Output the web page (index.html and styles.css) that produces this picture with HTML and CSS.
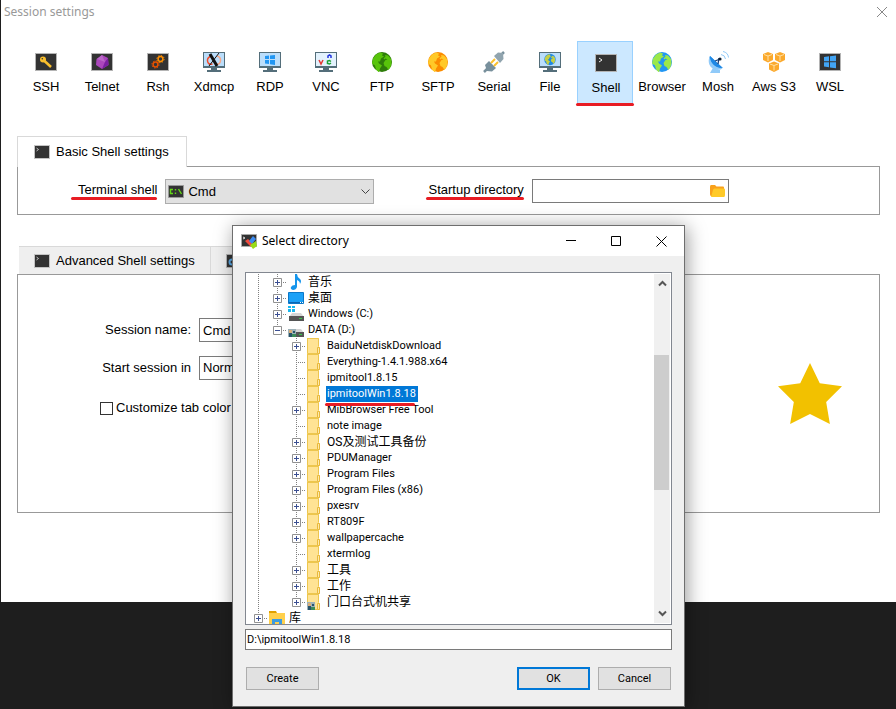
FILE: index.html
```html
<!DOCTYPE html>
<html lang="en">
<head>
<meta charset="utf-8">
<title>Session settings</title>
<link rel="stylesheet" href="styles.css">
</head>
<body>
<svg class="defs" aria-hidden="true">
  <symbol id="term" viewBox="0 0 22 18"><path fill="#b4b4b4" d="M0 0h22v18H0z"/><path fill="#333" d="M1 1h20v16H1z"/></symbol>
  <symbol id="shell" viewBox="0 0 22 18"><use href="#term"/><path d="M4 4l3 2-3 2" fill="none" stroke="#eee"/></symbol>
  <symbol id="shell-s" viewBox="0 0 16 14"><path fill="#c4c4c4" d="M0 0h16v14H0z"/><path fill="#333" d="M1 1h14v12H1z"/><path d="M2.500 3l2 1.500-2 1.500" fill="none" stroke="#ddd" stroke-width=".8"/></symbol>
  <symbol id="monitor" viewBox="0 0 22 20"><path fill="#546e7a" d="M0 0h22v16H0zM8 16h6v2h4v2H4v-2h4z"/><path fill="#bbdefb" d="M1 1h20v13H1z"/></symbol>
  <symbol id="land" viewBox="0 0 20 20"><path d="M8 .5l3 1-1 2 2 1-3 2-1 3-2 0 1 2 3 2-2 3-1 4-3-3-1-4-3-2 1-5 3-4zM13 3l3 .500 3 3.500.5 4-1 4-2 3-2-3-2-1-1-3 2-3 2-.500-2-1-1 1-1-1 2-2z"/></symbol>
  <symbol id="folder" viewBox="0 0 16 16"><path fill="#ffe394" d="M0 0h12v9l1 0v7H0z"/><path fill="none" stroke="#edc64e" d="M.5 0v15.500H10.500M0 .5h11.500v8"/><path fill="#ffe9a9" stroke="#e8b93c" d="M10.500 9.500h2v6h-2z"/></symbol>
  <symbol id="people" viewBox="0 0 8 8"><path fill="#9db1b8" d="M0 0h8v8H0z"/><path fill="#28536b" d="M1 4h3v4H1zM5 2h2v2H5z"/><path fill="#d8ad78" d="M1 1h3v3H1z"/><path fill="#3c8b59" d="M4 5h4v3H4z"/></symbol>
  <symbol id="drive" viewBox="0 0 16 16"><path fill="#d6d6d6" d="M4 7h9l3 4H1z"/><path fill="#555" d="M1 10h15v5H1z"/><path fill="#38c84a" d="M11 12h3v1h-3z"/></symbol>
  <symbol id="plus" viewBox="0 0 9 9"><path fill="#fff" stroke="#919191" d="M.5.5h8v8h-8z"/><path stroke="#3b4f92" d="M2 4.500h5M4.500 2v5"/></symbol>
  <symbol id="minus" viewBox="0 0 9 9"><path fill="#fff" stroke="#919191" d="M.5.5h8v8h-8z"/><path stroke="#3b4f92" d="M2 4.500h5"/></symbol>
</svg>

<main class="window">
  <header class="titlebar">
    <h1>Session settings</h1>
    <button class="plain" aria-label="Close"><svg width="12" height="12"><path d="M1 1l10 10M11 1L1 11" stroke="#888"/></svg></button>
  </header>

  <nav class="types">
    <button class="type"><svg width="22" height="22" viewBox="0 -2 22 22"><use href="#term" width="22" height="18"/><circle cx="8" cy="6.500" r="3" fill="#fbc02d"/><path d="M9 7.500l7 6.500" stroke="#fbc02d" stroke-width="2.500"/><circle cx="7.300" cy="5.800" r=".8" fill="#333"/></svg>SSH</button>
    <button class="type"><svg width="22" height="22" viewBox="0 -2 22 22"><use href="#term" width="22" height="18"/><path fill="#ab47bc" d="M11 2l6 3 .500 7-6.500 4-6-4 .500-6z"/><path fill="#7b1fa2" d="M17 5l.5 7-6.500 4 3-7z"/><path fill="#ba68c8" d="M11 2l3 7-8-3z"/></svg>Telnet</button>
    <button class="type"><svg width="22" height="22" viewBox="0 -2 22 22"><use href="#term" width="22" height="18"/><g fill="none"><circle cx="13.500" cy="6" r="2.400" stroke="#fb8c00" stroke-width="1.500"/><circle cx="13.500" cy="6" r="3.600" stroke="#fb8c00" stroke-dasharray="1.400 1.400"/><circle cx="8.500" cy="11.500" r="2.400" stroke="#e65100" stroke-width="1.500"/><circle cx="8.500" cy="11.500" r="3.600" stroke="#e65100" stroke-dasharray="1.400 1.400"/></g></svg>Rsh</button>
    <button class="type"><svg width="22" height="22" viewBox="0 -1 22 22"><use href="#monitor" width="22" height="20"/><path d="M9 4Q4 5 4.500 9t5 3" fill="none" stroke="#f04a2a" stroke-width="1.500"/><path d="M14 4q4 1 3.500 5t-5 3" fill="none" stroke="#f7a98a" stroke-width="1.500"/><path d="M7 2l7 12" stroke="#111" stroke-width="3"/><path d="M16 1L6 14" stroke="#111"/></svg>Xdmcp</button>
    <button class="type"><svg width="22" height="22" viewBox="0 -1 22 22"><use href="#monitor" width="22" height="20"/><path fill="#2196f3" d="M6 4l4-.5V7H6zm5-.6L16 3v4h-5zM6 8h4v4l-4-.5zm5 0h5v5l-5-.8z"/></svg>RDP</button>
    <button class="type"><svg width="22" height="22" viewBox="0 -1 22 22"><use href="#monitor" width="22" height="20"/><path fill="#e3f2fd" d="M1 1h20v13H1z"/><g fill="none" stroke-width="1.500"><path stroke="#e53935" d="M4 8l2 4 2-4"/><path stroke="#2233e0" d="M13 6V4l1.500-1L16 4v2"/><path stroke="#19a030" d="M16 9.500l-1.500-1L12.500 9v2.500l2 .500 1.500-1"/></g></svg>VNC</button>
    <button class="type"><svg width="22" height="22" viewBox="-1 -1 22 22"><circle cx="10" cy="10" r="10" fill="#2e7d0a"/><use href="#land" width="20" height="20" fill="#58c40b"/></svg>FTP</button>
    <button class="type"><svg width="22" height="22" viewBox="-1 -1 22 22"><circle cx="10" cy="10" r="10" fill="#fb8c00"/><use href="#land" width="20" height="20" fill="#ffc928"/></svg>SFTP</button>
    <button class="type"><svg width="22" height="22" viewBox="0 0 22 22"><path d="M1 21l4-4M17 5l4-4" stroke="#78909c" stroke-width="2.500"/><path fill="#78909c" d="M2 14l4-4 7 7-4 3.500-5-.500z"/><path fill="#90a4ae" d="M11 5l4-3.500 5 .500.500 6-3.500 4z"/><path d="M8 12l4-4M11 15l4-4" stroke="#fbc02d" stroke-width="2"/></svg>Serial</button>
    <button class="type"><svg width="22" height="22" viewBox="0 -1 22 22"><use href="#monitor" width="22" height="20"/><circle cx="11" cy="7.500" r="5.700" fill="#1e88e5"/><use href="#land" x="5.500" y="2" width="11" height="11" fill="#c6cf45"/></svg>File</button>
    <button class="type active"><svg width="22" height="22" viewBox="0 -2 22 22"><use href="#shell" width="22" height="18"/></svg>Shell</button>
    <button class="type"><svg width="22" height="22" viewBox="-1 -1 22 22"><circle cx="10" cy="10" r="10" fill="#2196f3"/><use href="#land" width="20" height="20" fill="#9be84a"/></svg>Browser</button>
    <button class="type"><svg width="22" height="22" viewBox="0 0 22 22"><path fill="#90caf9" d="M7 15l3 4h3v3H3z"/><path fill="#1e88e5" d="M3 5c-3 6 1 14 12 12z"/><path fill="#90caf9" d="M3 5c-3 5-1 13 7 14 3 0 5-1 5.500-2C7 17 3 11 3 5z"/><path fill="#1e88e5" d="M3 5l13 12C9 17 3 11 3 5z"/><path d="M8 10l5-2M11 13l1-6" stroke="#1a3f78" stroke-width="1.300"/><circle cx="13" cy="8" r="1.600" fill="#123"/><path d="M14 3.500q4 .500 4.500 4.500M16 .5q5 1 5.500 6" fill="none" stroke="#90caf9"/></svg>Mosh</button>
    <button class="type"><svg width="22" height="22" viewBox="0 0 22 22"><g fill="#fba92c"><path id="cube" d="M0 3l5-2 5 2v6l-5 2.500L0 9z"/><use href="#cube" x="12"/><use href="#cube" x="6" y="9.500"/></g><path d="M1 3.500l4 1.500 4-1.500M5 5v5M13 3.500l4 1.500 4-1.500M17 5v5M7 13l4 1.500 4-1.500M11 14.500v5" fill="none" stroke="#ffe0a3"/></svg>Aws S3</button>
    <button class="type"><svg width="22" height="22" viewBox="0 -2 22 22"><use href="#term" width="22" height="18"/><path fill="#42a5f5" d="M5 4l5-.7v5H5zm6-.8L17 2.500v5.800h-6zM5 9.300h5v5L5 13.600zm6 0h6v6l-6-.8z"/></svg>WSL</button>
  </nav>

  <section class="group">
    <div class="tabs">
      <button class="tab current"><svg width="16" height="14"><use href="#shell-s"/></svg>Basic Shell settings</button>
    </div>
    <div class="panel basic">
      <label class="marked" for="shell">Terminal shell</label>
      <div class="combo">
        <svg class="combo-icon" width="16" height="13" viewBox="0 0 16 13"><path fill="#333" stroke="#999" d="M.5.5h15v12H.5z"/><path d="M5 4.500H2.500v4H5M7.500 4v1.500M7.500 7.500V9M10.500 4l3 5" fill="none" stroke="#62d915" stroke-width="1.400"/></svg>
        <select id="shell"><option>Cmd</option></select>
        <svg class="combo-arrow" width="9" height="6"><path d="M.5.5l4 4 4-4" fill="none" stroke="#444"/></svg>
      </div>
      <label class="marked wide" for="startup">Startup directory</label>
      <div class="path">
        <input id="startup" type="text">
        <button class="plain" aria-label="Browse"><svg width="15" height="13"><path fill="#f9a11b" d="M0 2q0-2 1-2h4l1.500 1.500H13q1 0 1 1V11H1Q0 11 0 9z"/><path fill="#ffca28" d="M3 5q.3-1.500 1.500-1.500H14q1 0 1 1V10q0 2-1 2H1z"/></svg></button>
      </div>
    </div>
  </section>

  <section class="group">
    <div class="tabs muted">
      <button class="tab"><svg width="16" height="14"><use href="#shell-s"/></svg>Advanced Shell settings</button>
      <button class="tab"><svg width="16" height="14" viewBox="0 0 16 14"><path fill="#333" stroke="#b4b4b4" d="M.5.5h15v13H.5z"/><circle cx="6" cy="8" r="2.500" fill="none" stroke="#5aa9e6" stroke-width="2"/></svg></button>
    </div>
    <div class="panel advanced">
      <form class="form">
        <label for="name">Session name:</label><input id="name" type="text" value="Cmd">
        <label for="start">Start session in</label><select id="start"><option>Normal tab</option></select>
        <label class="check"><input type="checkbox">Customize tab color</label>
      </form>
      <svg class="star" width="64" height="61" viewBox="115 71 190 181"><path fill="#f2c100" d="M210 71l29 60 66 9-47 47 11 65-59-30-59 30 11-65-47-47 66-9z"/></svg>
    </div>
  </section>
</main>

<div class="dialog" role="dialog" aria-labelledby="dlg-title">
  <header class="dialog-title">
    <svg width="16" height="16"><path fill="#333" stroke="#aaa" d="M.5 1.500h15v12H.5z"/><path d="M2 4l2 1-2 1" fill="none" stroke="#ddd"/><path fill="#f04a3e" d="M4 8l3-2 5 5-2 3z"/><path fill="#3d8bf0" d="M8 8l4-5 3 3-4 5z"/><path fill="#98dc17" d="M9 12l6-4 1 5-4 3z"/></svg>
    <h2 id="dlg-title">Select directory</h2>
    <button class="plain" aria-label="Minimize"><svg width="11" height="11"><path d="M0 4.500h10" stroke="#000"/></svg></button>
    <button class="plain" aria-label="Maximize"><svg width="11" height="11"><path d="M.5.5h9v9h-9z" fill="none" stroke="#000"/></svg></button>
    <button class="plain" aria-label="Close"><svg width="11" height="11"><path d="M.5.5l10 10M10.500.5l-10 10" stroke="#000"/></svg></button>
  </header>
  <div class="dialog-body">
    <div class="treebox">
      <ul class="tree">
        <li><i class="v"></i><i class="v h"><svg><use href="#plus"/></svg></i><svg class="ico" viewBox="0 0 16 16"><path fill="#1595ec" d="M7 0h2q0 3 3 5 2 2 0 5 0-3-3-4v7q-1 3-4 3-3-1-2-3 1-2 4-2z"/></svg><span class="zh">音乐</span></li>
        <li><i class="v"></i><i class="v h"><svg><use href="#plus"/></svg></i><svg class="ico" viewBox="0 0 16 16"><path fill="#1ba1f7" stroke="#0c78c8" d="M.5 2.500h15v11H.5z"/><path fill="#0b65b2" d="M1 12h14v1H1z"/><path fill="#fff" d="M12 12h1v1h-1zM14 12h1v1h-1z"/></svg><span class="zh">桌面</span></li>
        <li><i class="v"></i><i class="v h"><svg><use href="#plus"/></svg></i><svg class="ico" viewBox="0 0 16 16"><use href="#drive"/><path fill="#18b7ee" d="M0 0h3v2H0zM4 0h3v2H4zM0 3h3v3H0zM4 3h3v3H4z"/></svg><span>Windows (C:)</span></li>
        <li><i class="v"></i><i class="v h end"><svg><use href="#minus"/></svg></i><svg class="ico" viewBox="0 0 16 16"><use href="#drive"/><use href="#people" y="7" width="8" height="8"/></svg><span>DATA (D:)</span></li>
        <li><i class="v"></i><i></i><i class="v h"><svg><use href="#plus"/></svg></i><svg class="ico"><use href="#folder"/></svg><span>BaiduNetdiskDownload</span></li>
        <li><i class="v"></i><i></i><i class="v h"></i><svg class="ico"><use href="#folder"/></svg><span>Everything-1.4.1.988.x64</span></li>
        <li><i class="v"></i><i></i><i class="v h"></i><svg class="ico"><use href="#folder"/></svg><span>ipmitool1.8.15</span></li>
        <li><i class="v"></i><i></i><i class="v h"></i><svg class="ico"><use href="#folder"/></svg><span class="selected">ipmitoolWin1.8.18</span></li>
        <li><i class="v"></i><i></i><i class="v h"><svg><use href="#plus"/></svg></i><svg class="ico"><use href="#folder"/></svg><span>MibBrowser Free Tool</span></li>
        <li><i class="v"></i><i></i><i class="v h"></i><svg class="ico"><use href="#folder"/></svg><span>note image</span></li>
        <li><i class="v"></i><i></i><i class="v h"><svg><use href="#plus"/></svg></i><svg class="ico"><use href="#folder"/></svg><span class="zh">OS及测试工具备份</span></li>
        <li><i class="v"></i><i></i><i class="v h"><svg><use href="#plus"/></svg></i><svg class="ico"><use href="#folder"/></svg><span>PDUManager</span></li>
        <li><i class="v"></i><i></i><i class="v h"><svg><use href="#plus"/></svg></i><svg class="ico"><use href="#folder"/></svg><span>Program Files</span></li>
        <li><i class="v"></i><i></i><i class="v h"><svg><use href="#plus"/></svg></i><svg class="ico"><use href="#folder"/></svg><span>Program Files (x86)</span></li>
        <li><i class="v"></i><i></i><i class="v h"><svg><use href="#plus"/></svg></i><svg class="ico"><use href="#folder"/></svg><span>pxesrv</span></li>
        <li><i class="v"></i><i></i><i class="v h"><svg><use href="#plus"/></svg></i><svg class="ico"><use href="#folder"/></svg><span>RT809F</span></li>
        <li><i class="v"></i><i></i><i class="v h"><svg><use href="#plus"/></svg></i><svg class="ico"><use href="#folder"/></svg><span>wallpapercache</span></li>
        <li><i class="v"></i><i></i><i class="v h"></i><svg class="ico"><use href="#folder"/></svg><span>xtermlog</span></li>
        <li><i class="v"></i><i></i><i class="v h"><svg><use href="#plus"/></svg></i><svg class="ico"><use href="#folder"/></svg><span class="zh">工具</span></li>
        <li><i class="v"></i><i></i><i class="v h"><svg><use href="#plus"/></svg></i><svg class="ico"><use href="#folder"/></svg><span class="zh">工作</span></li>
        <li><i class="v"></i><i></i><i class="v h end"><svg><use href="#plus"/></svg></i><svg class="ico"><use href="#folder"/><use href="#people" y="8" width="8" height="8"/></svg><span class="zh">门口台式机共享</span></li>
        <li><i class="v h end"><svg><use href="#plus"/></svg></i><svg class="ico" viewBox="0 0 16 16"><path fill="#e0a100" d="M0 1h7l1 2H0z"/><path fill="#ffd04c" d="M0 3h16v13H0z"/><path d="M4.500 16v-5.500h7V16" fill="none" stroke="#3c9be0" stroke-width="3"/></svg><span class="zh">库</span></li>
      </ul>
      <div class="scrollbar">
        <svg width="9" height="8"><path d="M1 6.500L4.500 3 8 6.500" fill="none" stroke="#555" stroke-width="2"/></svg>
        <div class="track"><div class="thumb"></div></div>
        <svg width="9" height="8"><path d="M1 1.500L4.500 5 8 1.500" fill="none" stroke="#555" stroke-width="2"/></svg>
      </div>
    </div>
    <input class="target" type="text" aria-label="Directory" value="D:\ipmitoolWin1.8.18">
    <div class="actions">
      <button class="push">Create</button>
      <button class="push default">OK</button>
      <button class="push">Cancel</button>
    </div>
  </div>
</div>
</body>
</html>
```
FILE: styles.css
```css
* { box-sizing: border-box; }
body {
  margin: 0;
  position: relative;
  min-height: 100vh;
  overflow: hidden;
  background: #1e1e1e;
  color: #000;
  font: 13px/18px "Liberation Sans", Arial, sans-serif;
}
button, input, select { font: inherit; color: inherit; margin: 0; }
h1, h2 { margin: 0; font-weight: normal; }
svg { display: block; flex: none; }
.defs { position: absolute; width: 0; height: 0; }
.plain { border: 0; padding: 0; background: none; }

.window { margin-left: 1px; padding-bottom: 89px; background: #fff; }
.titlebar { display: flex; justify-content: space-between; align-items: center; height: 24px; padding: 0 8px 0 3px; }
.titlebar h1 { color: #999; font: 12px/16px "Noto Sans", sans-serif; }

.types { display: flex; margin: 17px 16px 0; height: 64px; }
.type {
  position: relative;
  flex: 0 0 56px;
  display: flex;
  flex-direction: column;
  align-items: center;
  gap: 5px;
  padding: 10px 0 0 2px;
  border: 0;
  background: none;
  white-space: nowrap;
}
.type.active { border: 1px solid #99d1ff; background: #cce8ff; }
.type.active::after {
  content: "";
  position: absolute;
  left: -2px; right: -2px; bottom: -2px;
  height: 3px;
  border-radius: 2px;
  background: #e81c23;
}

.group { margin: 31px 16px 0; }
.tabs { display: flex; }
.tab {
  display: flex;
  align-items: center;
  gap: 6px;
  height: 30px;
  padding: 0 17px 0 16px;
  border: 1px solid #d9d9d9;
  border-bottom: 0;
  background: #fff;
}
.tab.current { position: relative; height: 31px; margin-bottom: -1px; }
.muted { padding-left: 2px; }
.muted .tab { height: 28px; padding: 0 15px; border-left: 0; background: #efefef; }
.panel { border: 1px solid #999; }
.basic { display: flex; align-items: flex-start; padding: 12px 0 10px 60px; }
.marked { position: relative; margin: 2px 8px 0 0; }
.marked::after {
  content: "";
  position: absolute;
  left: -7px; right: 0; bottom: -1px;
  height: 3px;
  border-radius: 2px;
  background: #e81c23;
}
.marked.wide { margin-left: 54px; }
.marked.wide::after { left: -2px; }
.combo { position: relative; }
.combo select {
  appearance: none;
  display: block;
  width: 209px;
  height: 25px;
  padding: 0 22px;
  border: 1px solid #adadad;
  border-radius: 0;
  background: #e1e1e1;
}
.combo-icon { position: absolute; left: 3px; top: 6px; }
.combo-arrow { position: absolute; right: 4px; top: 10px; }
.path { display: flex; align-items: center; width: 197px; height: 24px; padding-right: 3px; border: 1px solid #7a7a7a; }
.path input { flex: 1; min-width: 0; border: 0; outline: 0; background: none; }

.advanced { display: flex; justify-content: space-between; align-items: center; height: 239px; padding: 0 37px 0 81px; }
.form { display: grid; grid-template-columns: 92px 200px; gap: 14px 8px; align-self: flex-start; padding-top: 43px; }
.form > label { align-self: center; text-align: right; white-space: nowrap; }
.form input[type="text"], .form select {
  appearance: none;
  height: 24px;
  padding: 0 3px;
  border: 1px solid #7a7a7a;
  border-radius: 0;
  background: #fff;
}
.form .check { grid-column: 1 / 3; display: flex; align-items: center; gap: 3px; padding: 5px 0 0 1px; }
.check input { appearance: none; width: 13px; height: 13px; border: 1px solid #333; background: #fff; }

.dialog {
  position: absolute;
  left: 232px; top: 225px;
  width: 453px;
  border: 1px solid #6e6e6e;
  background: #efefef;
  box-shadow: 2px 2px 18px rgba(0, 0, 0, .4);
  font: 11px/16px Roboto, "Noto Sans CJK SC", sans-serif;
}
.dialog-title { display: flex; align-items: center; height: 30px; padding: 0 17px 0 8px; background: #fff; }
.dialog-title h2 { margin: 0 auto 0 5px; font: 12px/16px "Noto Sans", sans-serif; }
.dialog-title .plain + .plain { margin-left: 34px; }
.dialog-body { padding: 16px 12px; }
.treebox { display: flex; height: 353px; padding: 1px; border: 1px solid #828790; background: #fff; overflow: hidden; }
.tree { flex: 1; margin: 0; padding: 0 0 0 2px; list-style: none; }
.tree li { display: flex; height: 16px; }
.tree i { position: relative; flex: none; width: 19px; height: 16px; }
.tree i svg { position: absolute; z-index: 1; left: 5px; top: 4px; width: 9px; height: 9px; }
.v::before {
  content: "";
  position: absolute;
  left: 9px; top: 0;
  width: 1px; height: 16px;
  background: repeating-linear-gradient(#808080 0 1px, transparent 1px 2px);
}
.v.end::before { height: 8px; }
.h::after {
  content: "";
  position: absolute;
  left: 9px; top: 8px;
  width: 10px; height: 1px;
  background: repeating-linear-gradient(to right, #808080 0 1px, transparent 1px 2px);
}
.ico { width: 16px; height: 16px; margin: 0 3px 0 1px; }
.tree span { padding: 0 2px 0 1px; white-space: nowrap; }
.tree .zh { font-size: 12px; }
.tree .selected { position: relative; background: #0078d7; color: #fff; }
.selected::after {
  content: "";
  position: absolute;
  left: -1px; right: 3px; bottom: -4px;
  height: 3px;
  border-radius: 2px;
  background: #e81c23;
}
.scrollbar { display: flex; flex-direction: column; align-items: center; width: 16px; padding: 5px 0; background: #f0f0f0; }
.track { flex: 1; width: 100%; padding-top: 68px; }
.thumb { height: 135px; margin-right: 1px; background: #cdcdcd; }
.target { display: block; width: 100%; height: 21px; margin-top: 4px; padding: 0 1px; border: 1px solid #7a7a7a; background: #fff; }
.actions { display: flex; gap: 8px; padding: 17px 1px 0; }
.push { width: 73px; height: 23px; padding: 0; border: 1px solid #adadad; background: #e1e1e1; }
.push:first-child { margin-right: auto; }
.push.default { border: 2px solid #0078d7; }
```
